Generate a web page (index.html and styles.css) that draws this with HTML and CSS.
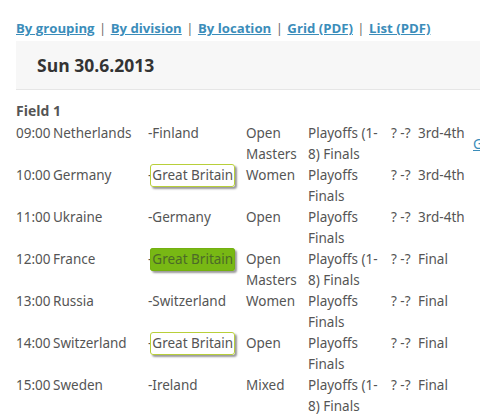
FILE: index.html
```html
<!DOCTYPE html>
<html>
<head>
<meta charset="utf-8">
<link rel="stylesheet" href="styles.css">
</head>
<body>
<div class="page">
  <nav class="views">
    <a href="#">By grouping</a> <span class="sep">|</span>
    <a href="#">By division</a> <span class="sep">|</span>
    <a href="#">By location</a> <span class="sep">|</span>
    <a href="#">Grid (PDF)</a> <span class="sep">|</span>
    <a href="#">List (PDF)</a>
  </nav>
  <div class="day">
    <h2 class="day-title">Sun 30.6.2013</h2>
  </div>
  <h3 class="field">Field 1</h3>
  <table class="games">
    <colgroup>
      <col class="c-time"><col class="c-home"><col class="c-away"><col class="c-div"><col class="c-round"><col class="c-score"><col class="c-res"><col class="c-link">
    </colgroup>
    <tr>
      <td>09:00</td><td>Netherlands</td><td>-Finland</td><td>Open Masters</td><td class="round">Playoffs (1-<wbr>8) Finals</td><td class="nw">? -?</td><td class="nw">3rd-4th</td><td class="mid"><a href="#">Game</a></td>
    </tr>
    <tr>
      <td>10:00</td><td>Germany</td><td>-<span class="team team-out">Great Britain</span></td><td>Women</td><td class="round">Playoffs Finals</td><td class="nw">? -?</td><td class="nw">3rd-4th</td><td></td>
    </tr>
    <tr>
      <td>11:00</td><td>Ukraine</td><td>-Germany</td><td>Open</td><td class="round">Playoffs Finals</td><td class="nw">? -?</td><td class="nw">3rd-4th</td><td></td>
    </tr>
    <tr>
      <td>12:00</td><td>France</td><td>-<span class="team team-fill">Great Britain</span></td><td>Open Masters</td><td class="round">Playoffs (1-<wbr>8) Finals</td><td class="nw">? -?</td><td class="nw">Final</td><td></td>
    </tr>
    <tr>
      <td>13:00</td><td>Russia</td><td>-Switzerland</td><td>Women</td><td class="round">Playoffs Finals</td><td class="nw">? -?</td><td class="nw">Final</td><td></td>
    </tr>
    <tr>
      <td>14:00</td><td>Switzerland</td><td>-<span class="team team-out">Great Britain</span></td><td>Open</td><td class="round">Playoffs Finals</td><td class="nw">? -?</td><td class="nw">Final</td><td></td>
    </tr>
    <tr>
      <td>15:00</td><td>Sweden</td><td>-Ireland</td><td>Mixed</td><td class="round">Playoffs (1-<wbr>8) Finals</td><td class="nw">? -?</td><td class="nw">Final</td><td></td>
    </tr>
  </table>
</div>
</body>
</html>
```
FILE: styles.css
```css
html, body {
  margin: 0;
  padding: 0;
  background: #fff;
  overflow: hidden;
}
.page {
  padding: 16px 0 0 16px;
  width: 520px;
  font-family: "Noto Sans", "Open Sans", sans-serif;
  color: #555;
}
.views {
  font-family: "Open Sans", sans-serif;
  font-weight: 700;
  font-size: 13.2px;
  line-height: 24px;
  color: #555;
  white-space: nowrap;
}
.views a {
  color: #3b8dba;
  text-decoration: underline;
}
.views .sep {
  font-weight: 400;
  color: #666;
  padding: 0 1px;
}
.day {
  margin-top: 1px;
  background: #f7f7f7;
  border-bottom: 1px solid #e6e6e6;
  height: 48px;
  padding: 0 21px;
  display: flex;
  align-items: center;
}
.day-title {
  margin: 0;
  font-family: "Open Sans", sans-serif;
  font-weight: 700;
  font-size: 17.5px;
  color: #333;
}
.field {
  margin: 11px 0 0 0;
  font-family: "Open Sans", sans-serif;
  font-weight: 700;
  font-size: 14px;
  line-height: 20px;
  color: #555;
}
.games {
  border-collapse: collapse;
  table-layout: fixed;
  width: 497px;
  font-size: 13.5px;
  line-height: 21px;
  color: #555;
  margin-top: 2px;
}
.games td {
  padding: 0;
  vertical-align: top;
  height: 42px;
}
.c-time { width: 37px; }
.c-home { width: 95px; }
.c-away { width: 98px; }
.c-div { width: 62px; }
.c-round { width: 83px; }
.c-score { width: 27px; }
.c-res { width: 55px; }
.c-link { width: 40px; }
.games td.round {
  padding-right: 10px;
}
.games td.nw { white-space: nowrap; }
.games td.mid { vertical-align: middle; }
.games a {
  color: #3b8dba;
  text-decoration: underline;
}
.team {
  display: inline;
  padding: 1px 1px 2px;
  margin-left: -2px;
  border: 1px solid #b8cf3a;
  border-radius: 3px;
  box-shadow: 2px 2px 2px rgba(0, 0, 0, 0.4);
}
.team-out {
  background: #fff;
  color: #555;
}
.team-fill {
  background: #78b814;
  border-color: #74b010;
  color: #4c6a28;
}
```
